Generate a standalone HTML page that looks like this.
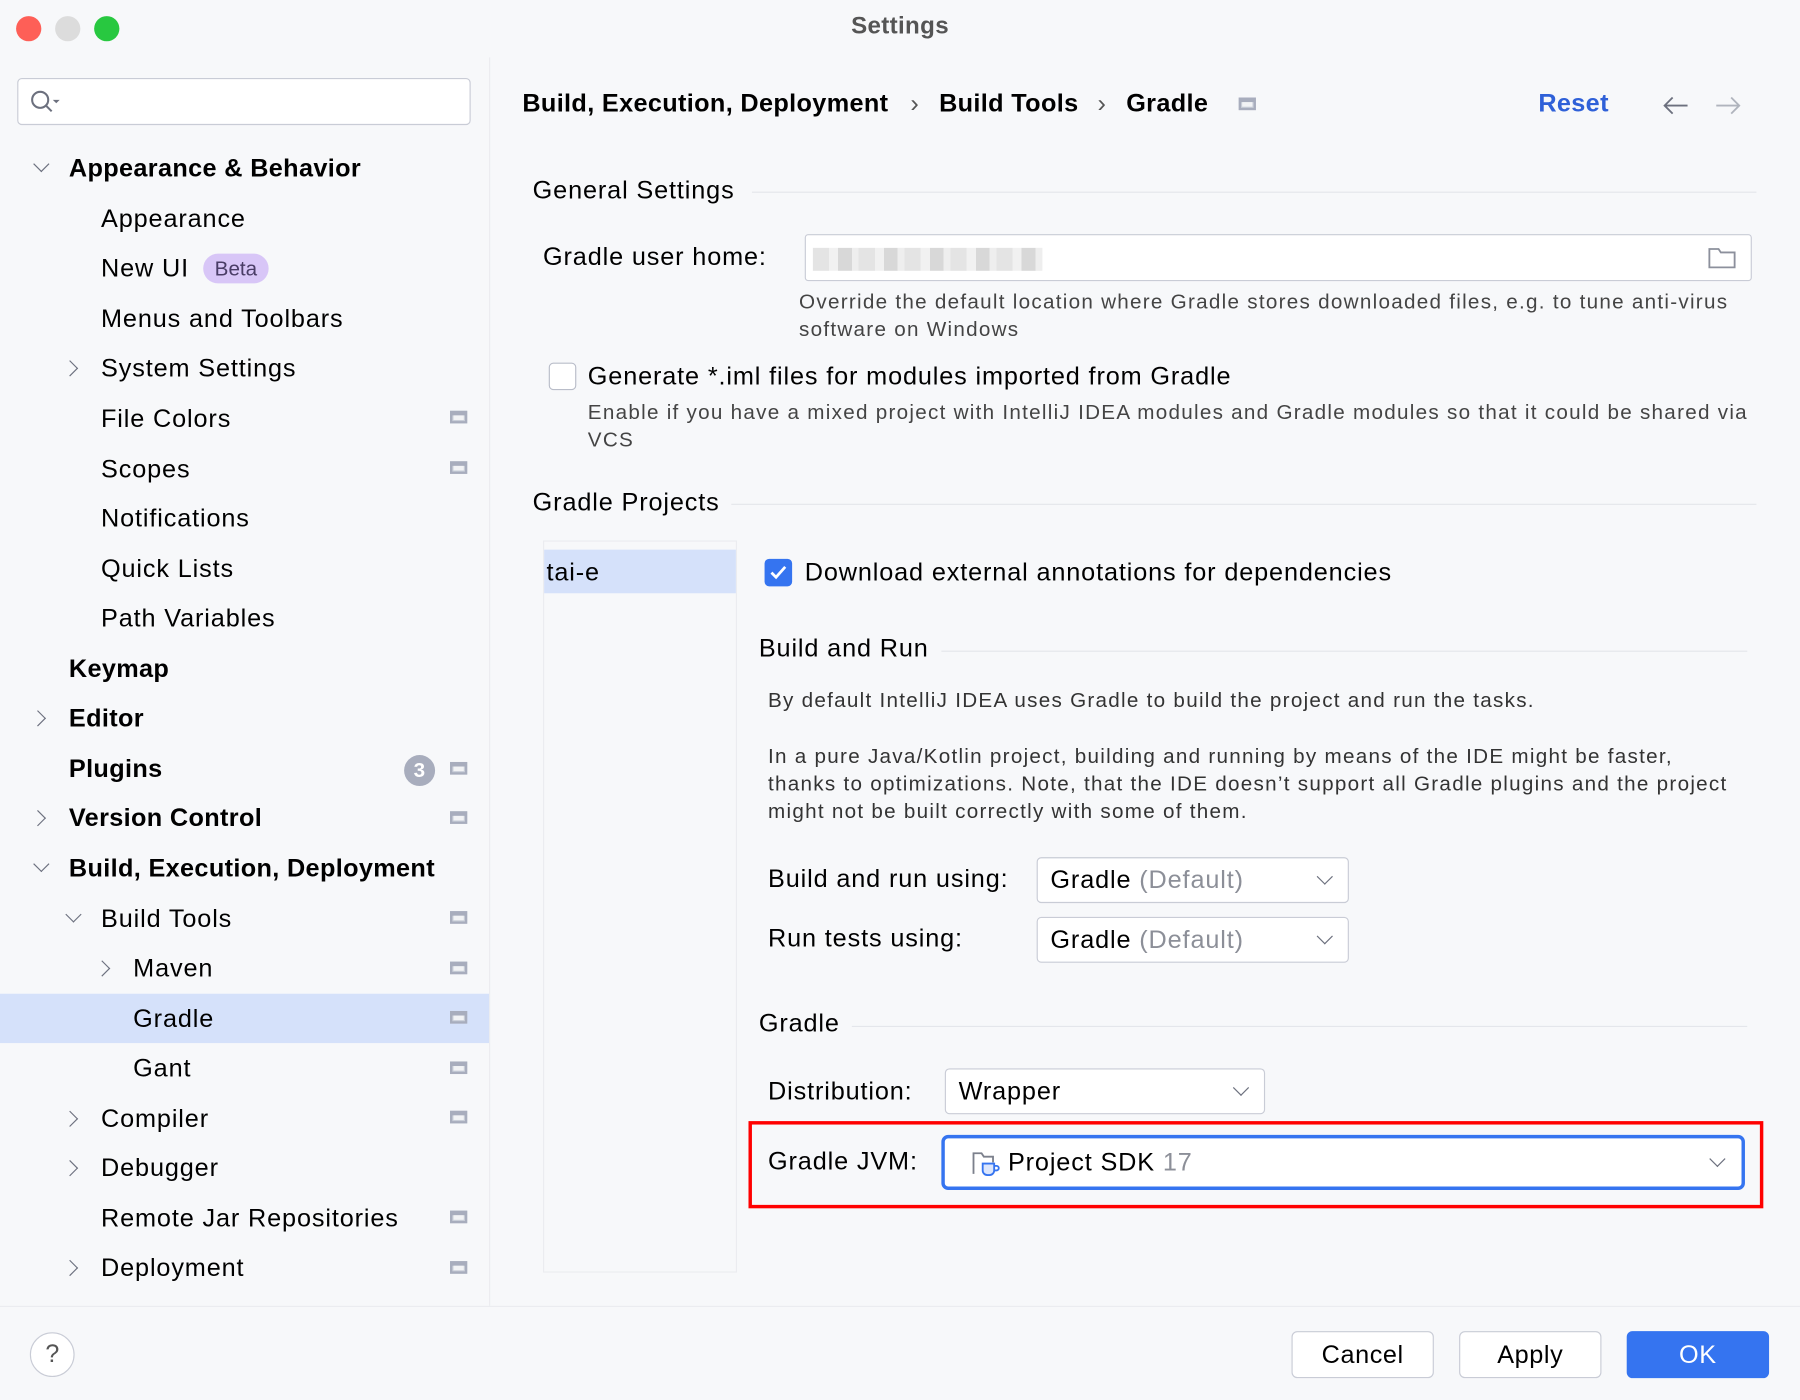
<!DOCTYPE html>
<html><head><meta charset="utf-8"><style>
*{margin:0;padding:0;box-sizing:border-box}
html,body{width:1800px;height:1400px;overflow:hidden;background:#f7f8fa}
#w{position:absolute;left:0;top:0;width:1568px;height:1220px;transform:scale(1.148,1.1475);transform-origin:0 0;font-family:"Liberation Sans",sans-serif;color:#000;background:#f7f8fa;border-radius:12px;overflow:hidden}
.a{position:absolute;white-space:nowrap}
.t{font-size:22px;line-height:26px;letter-spacing:0.75px}
.b{font-weight:bold;letter-spacing:0.3px}
.d{font-size:18px;line-height:24px;color:#444;letter-spacing:1.1px}
.ch{position:absolute;width:10px;height:10px;border-right:1.6px solid #6c707e;border-bottom:1.6px solid #6c707e}
.dn{transform:rotate(45deg)}
.rt{transform:rotate(-45deg)}
.ic{position:absolute;width:15px;height:11px;border:2px solid #a8adbd;border-top-width:4px;background:#c9ced8}
.ic:after{content:"";position:absolute;left:1px;top:0;right:1px;bottom:1px;background:#f2f3f5}
.ln{position:absolute;height:1px;background:#e4e6eb}
.dd{position:absolute;background:#fff;border:1px solid #c9ccd6;border-radius:4px}
.btn{position:absolute;top:1160px;height:41px;width:124px;border:1px solid #c9ccd6;border-radius:5px;background:#fff;font-size:22px;text-align:center;line-height:39px;letter-spacing:0.5px}
</style></head><body><div id="w">
<div class="a b" style="left:0;width:1568px;text-align:center;top:11px;font-size:21px;color:#555">Settings</div>
<div class="a" style="left:14px;top:14px;width:22px;height:22px;border-radius:50%;background:#fe5f57"></div>
<div class="a" style="left:48px;top:14px;width:22px;height:22px;border-radius:50%;background:#dcdcdc"></div>
<div class="a" style="left:82px;top:14px;width:22px;height:22px;border-radius:50%;background:#28c840"></div>
<div class="a" style="left:426px;top:50px;width:1px;height:1088px;background:#ebecf0"></div>
<div class="a" style="left:0;top:1138px;width:1568px;height:1px;background:#ebecf0"></div>
<div class="a" style="left:15px;top:68px;width:395px;height:41px;background:#fff;border:1.5px solid #c9ccd6;border-radius:4px"></div>
<svg class="a" style="left:25px;top:77px" width="30" height="24"><circle cx="10" cy="10" r="7" fill="none" stroke="#6c707e" stroke-width="1.8"/><path d="M15 15l5 5" stroke="#6c707e" stroke-width="1.8"/><path d="M21 10h6l-3 3z" fill="#6c707e"/></svg>
<div class="a" style="left:0;top:866px;width:426px;height:43px;background:#d5e1fa"></div>
<div class="ch dn" style="left:31px;top:138px"></div>
<div class="a t b" style="left:60px;top:134px">Appearance &amp; Behavior</div>
<div class="a t" style="left:88px;top:178px">Appearance</div>
<div class="a t" style="left:88px;top:221px">New UI</div>
<div class="a" style="left:177px;top:221px;width:57px;height:26px;border-radius:13px;background:#d8c6f7;color:#4a3d66;font-size:18px;line-height:26px;text-align:center">Beta</div>
<div class="a t" style="left:88px;top:265px">Menus and Toolbars</div>
<div class="ch rt" style="left:56px;top:316px"></div>
<div class="a t" style="left:88px;top:308px">System Settings</div>
<div class="a t" style="left:88px;top:352px">File Colors</div><div class="ic" style="left:392px;top:358px"></div>
<div class="a t" style="left:88px;top:396px">Scopes</div><div class="ic" style="left:392px;top:402px"></div>
<div class="a t" style="left:88px;top:439px">Notifications</div>
<div class="a t" style="left:88px;top:483px">Quick Lists</div>
<div class="a t" style="left:88px;top:526px">Path Variables</div>
<div class="a t b" style="left:60px;top:570px">Keymap</div>
<div class="ch rt" style="left:28px;top:621px"></div>
<div class="a t b" style="left:60px;top:613px">Editor</div>
<div class="a t b" style="left:60px;top:657px">Plugins</div>
<div class="a b" style="left:352px;top:658px;width:27px;height:27px;border-radius:50%;background:#a8adbd;color:#fff;font-size:18px;line-height:27px;text-align:center">3</div>
<div class="ic" style="left:392px;top:664px"></div>
<div class="ch rt" style="left:28px;top:708px"></div>
<div class="a t b" style="left:60px;top:700px">Version Control</div><div class="ic" style="left:392px;top:707px"></div>
<div class="ch dn" style="left:31px;top:748px"></div>
<div class="a t b" style="left:60px;top:744px">Build, Execution, Deployment</div>
<div class="ch dn" style="left:59px;top:792px"></div>
<div class="a t" style="left:88px;top:788px">Build Tools</div><div class="ic" style="left:392px;top:794px"></div>
<div class="ch rt" style="left:84px;top:839px"></div>
<div class="a t" style="left:116px;top:831px">Maven</div><div class="ic" style="left:392px;top:838px"></div>
<div class="a t" style="left:116px;top:875px">Gradle</div><div class="ic" style="left:392px;top:881px"></div>
<div class="a t" style="left:116px;top:918px">Gant</div><div class="ic" style="left:392px;top:925px"></div>
<div class="ch rt" style="left:56px;top:970px"></div>
<div class="a t" style="left:88px;top:962px">Compiler</div><div class="ic" style="left:392px;top:968px"></div>
<div class="ch rt" style="left:56px;top:1013px"></div>
<div class="a t" style="left:88px;top:1005px">Debugger</div>
<div class="a t" style="left:88px;top:1049px">Remote Jar Repositories</div><div class="ic" style="left:392px;top:1055px"></div>
<div class="ch rt" style="left:56px;top:1100px"></div>
<div class="a t" style="left:88px;top:1092px">Deployment</div><div class="ic" style="left:392px;top:1099px"></div>

<div class="a t b" style="left:455px;top:77px">Build, Execution, Deployment</div>
<div class="a t" style="left:793px;top:77px;color:#555">›</div>
<div class="a t b" style="left:818px;top:77px">Build Tools</div>
<div class="a t" style="left:956px;top:77px;color:#555">›</div>
<div class="a t b" style="left:981px;top:77px">Gradle</div>
<div class="ic" style="left:1079px;top:85px"></div>
<div class="a t b" style="left:1340px;top:77px;color:#2f60d8">Reset</div>
<svg class="a" style="left:1448px;top:82px" width="70" height="20"><path d="M22 10H2M9 3L2 10l7 7" fill="none" stroke="#6c707e" stroke-width="1.6"/><path d="M47 10h20M60 3l7 7-7 7" fill="none" stroke="#b0b4bd" stroke-width="1.6"/></svg>

<div class="a t" style="left:464px;top:153px">General Settings</div><div class="ln" style="left:655px;width:875px;top:167px"></div>
<div class="a t" style="left:473px;top:211px">Gradle user home:</div>
<div class="a" style="left:701px;top:204px;width:825px;height:41px;background:#fff;border:1px solid #c9ccd6;border-radius:3px"></div>
<div class="a" style="left:708px;top:216px;width:200px;height:20px;background:repeating-linear-gradient(90deg,#e4e4e4 0 14px,#f1f1f1 14px 22px,#d8d8d8 22px 34px,#eee 34px 40px)"></div>
<svg class="a" style="left:1487px;top:213px" width="26" height="22"><path d="M2 4h8l2 3h12v13H2z" fill="none" stroke="#8c909c" stroke-width="1.6"/></svg>
<div class="a d" style="left:696px;top:251px">Override the default location where Gradle stores downloaded files, e.g. to tune anti-virus</div>
<div class="a d" style="left:696px;top:275px">software on Windows</div>
<div class="a" style="left:478px;top:316px;width:24px;height:24px;border:1.5px solid #b9bdc9;border-radius:4px;background:#fff"></div>
<div class="a t" style="left:512px;top:315px">Generate *.iml files for modules imported from Gradle</div>
<div class="a d" style="left:512px;top:347px">Enable if you have a mixed project with IntelliJ IDEA modules and Gradle modules so that it could be shared via</div>
<div class="a d" style="left:512px;top:371px">VCS</div>

<div class="a t" style="left:464px;top:425px">Gradle Projects</div><div class="ln" style="left:637px;width:893px;top:439px"></div>
<div class="a" style="left:473px;top:471px;width:169px;height:638px;background:#f7f8fa;border:1px solid #ebecf0"></div>
<div class="a" style="left:474px;top:479px;width:167px;height:38px;background:#d5e1fa"></div>
<div class="a t" style="left:476px;top:486px">tai-e</div>
<div class="a" style="left:666px;top:487px;width:24px;height:24px;border-radius:4px;background:#3574f0"></div>
<svg class="a" style="left:666px;top:487px" width="24" height="24"><path d="M6 12l4 4 8-9" fill="none" stroke="#fff" stroke-width="2.4"/></svg>
<div class="a t" style="left:701px;top:486px">Download external annotations for dependencies</div>

<div class="a t" style="left:661px;top:552px">Build and Run</div><div class="ln" style="left:820px;width:702px;top:567px"></div>
<div class="a d" style="left:669px;top:598px;color:#333">By default IntelliJ IDEA uses Gradle to build the project and run the tasks.</div>
<div class="a d" style="left:669px;top:647px;color:#333">In a pure Java/Kotlin project, building and running by means of the IDE might be faster,</div>
<div class="a d" style="left:669px;top:671px;color:#333">thanks to optimizations. Note, that the IDE doesn’t support all Gradle plugins and the project</div>
<div class="a d" style="left:669px;top:695px;color:#333">might not be built correctly with some of them.</div>
<div class="a t" style="left:669px;top:753px">Build and run using:</div>
<div class="dd" style="left:903px;top:747px;width:272px;height:40px"></div>
<div class="a t" style="left:915px;top:754px">Gradle <span style="color:#8c8f98">(Default)</span></div>
<div class="ch dn" style="left:1149px;top:759px"></div>
<div class="a t" style="left:669px;top:805px">Run tests using:</div>
<div class="dd" style="left:903px;top:799px;width:272px;height:40px"></div>
<div class="a t" style="left:915px;top:806px">Gradle <span style="color:#8c8f98">(Default)</span></div>
<div class="ch dn" style="left:1149px;top:811px"></div>

<div class="a t" style="left:661px;top:879px">Gradle</div><div class="ln" style="left:742px;width:780px;top:894px"></div>
<div class="a t" style="left:669px;top:938px">Distribution:</div>
<div class="dd" style="left:823px;top:931px;width:279px;height:40px"></div>
<div class="a t" style="left:835px;top:938px">Wrapper</div>
<div class="ch dn" style="left:1076px;top:943px"></div>
<div class="a" style="left:652px;top:977px;width:884px;height:76px;border:3px solid #f00"></div>
<div class="a t" style="left:669px;top:999px">Gradle JVM:</div>
<div class="a" style="left:820px;top:989px;width:700px;height:48px;background:#fff;border:3px solid #3574f0;border-radius:6px"></div>
<svg class="a" style="left:846px;top:1001px" width="30" height="26"><path d="M2 22V4h7l2 3h8v5" fill="none" stroke="#7c808c" stroke-width="1.6"/><path d="M10 13h10v6a4 4 0 0 1-4 4h-2a4 4 0 0 1-4-4z" fill="#dce6fc" stroke="#3574f0" stroke-width="1.6"/><path d="M20 15h2a2 2 0 0 1 0 4h-2" fill="none" stroke="#3574f0" stroke-width="1.6"/></svg>
<div class="a t" style="left:878px;top:1000px">Project SDK <span style="color:#8c8f98">17</span></div>
<div class="ch dn" style="left:1491px;top:1005px"></div>

<div class="a" style="left:26px;top:1161px;width:39px;height:39px;border-radius:50%;border:1.5px solid #c9ccd6;background:#fff;text-align:center;font-size:22px;line-height:36px;color:#555">?</div>
<div class="btn" style="left:1125px">Cancel</div>
<div class="btn" style="left:1271px">Apply</div>
<div class="btn" style="left:1417px;background:#3574f0;border-color:#3574f0;color:#fff">OK</div>
</div></body></html>
